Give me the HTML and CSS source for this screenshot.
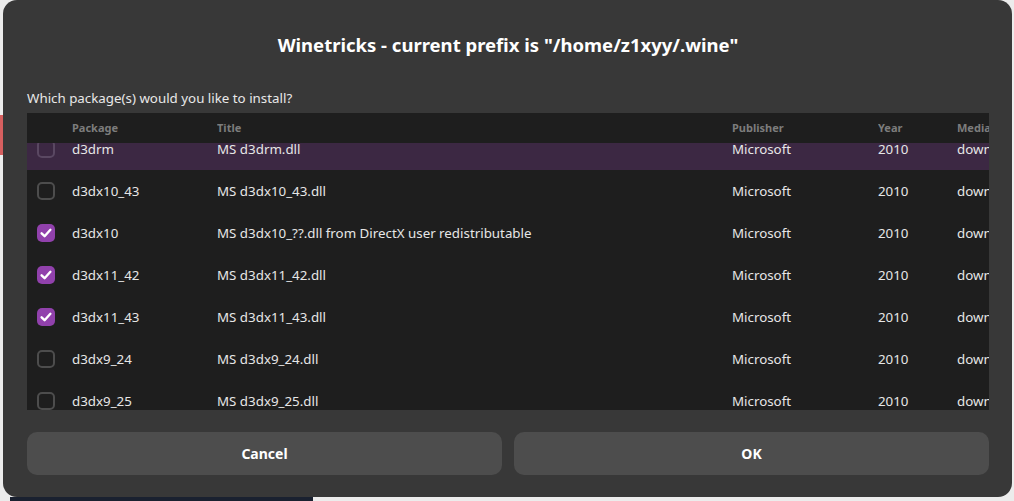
FILE: index.html
```html
<!DOCTYPE html>
<html>
<head>
<meta charset="utf-8">
<link rel="stylesheet" href="styles.css">
</head>
<body>
<div class="dialog">
  <div class="title">Winetricks - current prefix is "/home/z1xyy/.wine"</div>
  <div class="label">Which package(s) would you like to install?</div>
  <div class="table">
    <div class="row head">
      <div></div>
      <div>Package</div>
      <div>Title</div>
      <div>Publisher</div>
      <div>Year</div>
      <div>Media</div>
    </div>
    <div class="body">
      <div class="rows">
        <div class="row selected">
          <div><span class="cb"></span></div>
          <div>d3drm</div><div>MS d3drm.dll</div><div>Microsoft</div><div>2010</div><div>download</div>
        </div>
        <div class="row">
          <div><span class="cb"></span></div>
          <div>d3dx10_43</div><div>MS d3dx10_43.dll</div><div>Microsoft</div><div>2010</div><div>download</div>
        </div>
        <div class="row">
          <div><span class="cb on"><svg viewBox="0 0 18 18" width="18" height="18"><path d="M4.6 9.3 L7.6 12.2 L13.4 5.8" fill="none" stroke="#fff" stroke-width="2.4" stroke-linecap="round" stroke-linejoin="round"/></svg></span></div>
          <div>d3dx10</div><div>MS d3dx10_??.dll from DirectX user redistributable</div><div>Microsoft</div><div>2010</div><div>download</div>
        </div>
        <div class="row">
          <div><span class="cb on"><svg viewBox="0 0 18 18" width="18" height="18"><path d="M4.6 9.3 L7.6 12.2 L13.4 5.8" fill="none" stroke="#fff" stroke-width="2.4" stroke-linecap="round" stroke-linejoin="round"/></svg></span></div>
          <div>d3dx11_42</div><div>MS d3dx11_42.dll</div><div>Microsoft</div><div>2010</div><div>download</div>
        </div>
        <div class="row">
          <div><span class="cb on"><svg viewBox="0 0 18 18" width="18" height="18"><path d="M4.6 9.3 L7.6 12.2 L13.4 5.8" fill="none" stroke="#fff" stroke-width="2.4" stroke-linecap="round" stroke-linejoin="round"/></svg></span></div>
          <div>d3dx11_43</div><div>MS d3dx11_43.dll</div><div>Microsoft</div><div>2010</div><div>download</div>
        </div>
        <div class="row">
          <div><span class="cb"></span></div>
          <div>d3dx9_24</div><div>MS d3dx9_24.dll</div><div>Microsoft</div><div>2010</div><div>download</div>
        </div>
        <div class="row">
          <div><span class="cb"></span></div>
          <div>d3dx9_25</div><div>MS d3dx9_25.dll</div><div>Microsoft</div><div>2010</div><div>download</div>
        </div>
      </div>
    </div>
  </div>
  <div class="buttons">
    <button class="btn">Cancel</button>
    <button class="btn">OK</button>
  </div>
</div>
</body>
</html>
```

FILE: styles.css
```css
html, body {
  margin: 0;
  padding: 0;
}
body {
  width: 1014px;
  height: 501px;
  overflow: hidden;
  font-family: "Noto Sans", "Open Sans", sans-serif;
  background:
    linear-gradient(#d65f5f, #d65f5f) 0 115px / 3px 40px no-repeat,
    linear-gradient(#1a2130, #1a2130) 10px 497px / 303px 4px no-repeat,
    #ececec;
}
.dialog {
  box-sizing: border-box;
  margin-left: 3px;
  width: 1009px;
  height: 497px;
  background: #383838;
  border-radius: 14px;
  padding: 34px 23px 22px 24px;
  display: flex;
  flex-direction: column;
}
.title {
  text-align: center;
  color: #ffffff;
  font-weight: 700;
  font-size: 18.5px;
  line-height: 22px;
  height: 22px;
}
.label {
  margin-top: 33px;
  color: #e8e8e8;
  font-size: 13.33px;
  line-height: 18px;
  height: 18px;
}
.table {
  margin-top: 6px;
  height: 297px;
  background: #1e1e1e;
  display: flex;
  flex-direction: column;
  overflow: hidden;
}
.row {
  display: grid;
  grid-template-columns: 35px 145px 515px 146px 79px 1fr;
  padding-left: 10px;
  height: 42px;
  align-items: center;
  color: #e6e6e6;
  font-size: 13.33px;
  white-space: nowrap;
}
.row > div {
  overflow: hidden;
}
.row.head {
  height: 30px;
  flex: none;
  color: #7c7c7c;
  font-weight: 700;
  font-size: 11px;
  background: #1e1e1e;
  padding-bottom: 2px;
  box-sizing: border-box;
}
.body {
  flex: 1;
  overflow: hidden;
}
.rows {
  margin-top: -15px;
}
.row.selected {
  background: #3c2843;
}
.cb {
  box-sizing: border-box;
  display: block;
  width: 18px;
  height: 18px;
  border: 2px solid #4d4d4d;
  border-radius: 5px;
}
.row.selected .cb {
  border-color: #5a4862;
}
.cb.on {
  border: none;
  background: #9141ac;
}
.cb svg {
  display: block;
}
.buttons {
  margin-top: 22px;
  display: flex;
  gap: 12px;
  height: 43px;
}
.btn {
  flex: 1;
  border: none;
  border-radius: 10px;
  background: #4d4d4d;
  color: #ffffff;
  font-family: "Noto Sans", "Open Sans", sans-serif;
  font-weight: 700;
  font-size: 14px;
  padding: 0;
}
```
